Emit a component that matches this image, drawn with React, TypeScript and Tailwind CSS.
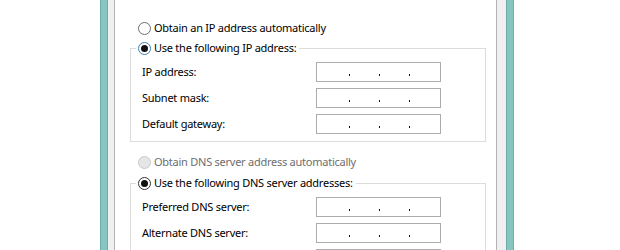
import React from 'react';

type RadioState = 'off' | 'on' | 'focus' | 'disabled';

const Radio = ({ state }: { state: RadioState }) => {
  const ring =
    state === 'disabled'
      ? 'border-[#c8c8c8] bg-[#e6e6e6]'
      : state === 'focus'
      ? 'border-[#3c7fb1] bg-white'
      : state === 'on'
      ? 'border-[#333333] bg-white'
      : 'border-[#6e6e6e] bg-white';
  return (
    <span className={`flex h-[13px] w-[13px] shrink-0 items-center justify-center rounded-full border ${ring}`}>
      {(state === 'on' || state === 'focus') && <span className="h-[7px] w-[7px] rounded-full bg-[#111111]" />}
    </span>
  );
};

const RadioRow = ({ state, label }: { state: RadioState; label: string }) => (
  <div className="flex h-[16px] items-center gap-[3px]">
    <Radio state={state} />
    <span className={state === 'disabled' ? 'text-[#6d6d6d]' : 'text-black'}>{label}</span>
  </div>
);

const IpBox = () => (
  <div className="flex h-[20px] w-[125px] items-end gap-[29px] border border-[#acacac] bg-white pb-[5px] pl-[32px]">
    <span className="h-[2px] w-[1px] bg-[#101010]" />
    <span className="h-[2px] w-[1px] bg-[#101010]" />
    <span className="h-[2px] w-[1px] bg-[#101010]" />
  </div>
);

const Group = ({ legend, focus, rows }: { legend: string; focus?: boolean; rows: string[] }) => (
  <div className="ml-[15px] mr-[10px] border border-[#dcdcdc] pb-[7px] pl-[11px]">
    <div className="-mt-[9px] ml-[-6px] w-fit bg-white px-[2px] pr-[3px]">
      <RadioRow state={focus ? 'focus' : 'on'} label={legend} />
    </div>
    <div className="mt-[6px] flex flex-col gap-[6px]">
      {rows.map((r) => (
        <div key={r} className="flex h-[20px] items-center">
          <span className="w-[174px]">{r}</span>
          <IpBox />
        </div>
      ))}
    </div>
  </div>
);

const Frame = () => <div className="h-full w-[8px] border-x border-[#6fadaa] bg-[#87c5c1]" />;

export default function App() {
  return (
    <div
      className="flex h-[250px] w-[620px] overflow-hidden bg-white text-[11px] leading-[16px] tracking-[-0.25px] text-black"
      style={{ fontFamily: '"Noto Sans", sans-serif' }}
    >
      <div className="w-[100px] shrink-0" />
      <Frame />
      <div className="w-[6px] shrink-0 bg-[#f0f0f0]" />
      <div className="w-[383px] shrink-0 border-x border-[#b4b4b4] bg-white">
        <div className="ml-[23px] mt-[20px]">
          <RadioRow state="off" label="Obtain an IP address automatically" />
        </div>
        <div className="mt-[12px]">
          <Group
            legend="Use the following IP address:"
            focus
            rows={['IP address:', 'Subnet mask:', 'Default gateway:']}
          />
        </div>
        <div className="ml-[23px] mt-[12px]">
          <RadioRow state="disabled" label="Obtain DNS server address automatically" />
        </div>
        <div className="mt-[13px]">
          <Group
            legend="Use the following DNS server addresses:"
            rows={['Preferred DNS server:', 'Alternate DNS server:', '']}
          />
        </div>
      </div>
      <div className="w-[9px] shrink-0 bg-[#f0f0f0]" />
      <Frame />
      <div className="flex-1" />
    </div>
  );
}
